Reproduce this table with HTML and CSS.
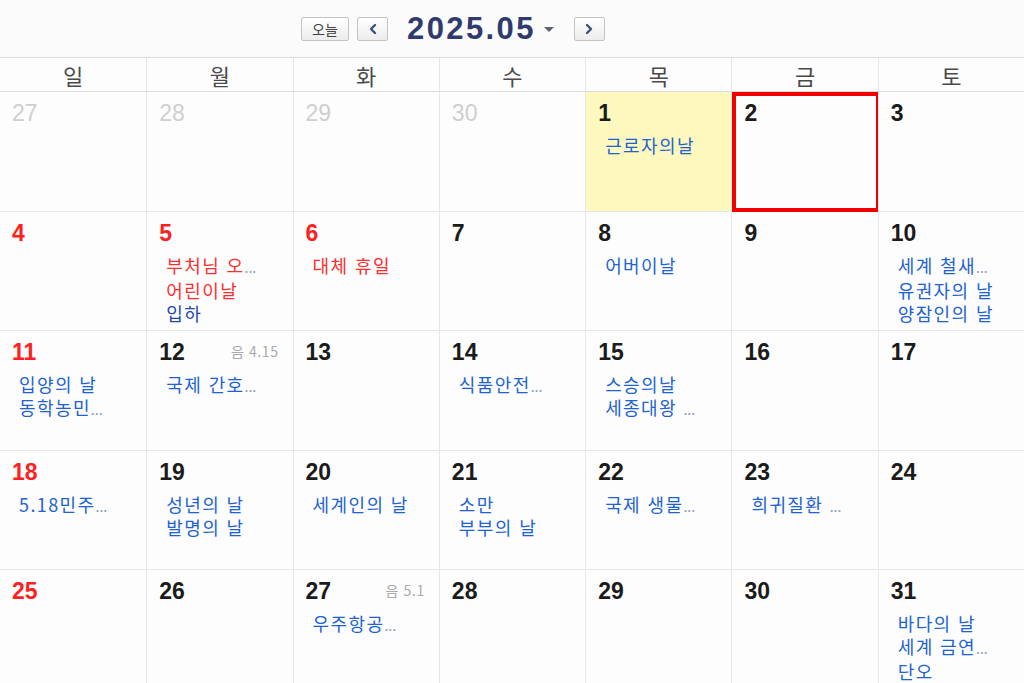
FILE: index.html
```html
<!DOCTYPE html>
<html lang="ko">
<head>
<meta charset="utf-8">
<title>2025.05 달력</title>
<link rel="stylesheet" href="styles.css">
</head>
<body>
<div class="toolbar">
  <button class="btn btn-today">오늘</button>
  <button class="btn btn-nav" aria-label="이전">
    <svg width="10" height="12" viewBox="0 0 10 12"><path d="M7 2 L3 6 L7 10" fill="none" stroke="#3d4f7a" stroke-width="2.4" stroke-linecap="round" stroke-linejoin="round"/></svg>
  </button>
  <div class="title">2025.05</div>
  <span class="caret"></span>
  <button class="btn btn-nav btn-next" aria-label="다음">
    <svg width="10" height="12" viewBox="0 0 10 12"><path d="M3 2 L7 6 L3 10" fill="none" stroke="#3d4f7a" stroke-width="2.4" stroke-linecap="round" stroke-linejoin="round"/></svg>
  </button>
</div>

<div class="dow">
  <div>일</div><div>월</div><div>화</div><div>수</div><div>목</div><div>금</div><div>토</div>
</div>

<div class="month">
  <div class="cell other"><div class="num">27</div></div>
  <div class="cell other"><div class="num">28</div></div>
  <div class="cell other"><div class="num">29</div></div>
  <div class="cell other"><div class="num">30</div></div>
  <div class="cell today"><div class="num">1</div><div class="ev">근로자의날</div></div>
  <div class="cell selected"><div class="num">2</div></div>
  <div class="cell"><div class="num">3</div></div>

  <div class="cell"><div class="num red">4</div></div>
  <div class="cell"><div class="num red">5</div><div class="ev red">부처님 오<span class="ell">...</span></div><div class="ev red">어린이날</div><div class="ev dark">입하</div></div>
  <div class="cell"><div class="num red">6</div><div class="ev red">대체 휴일</div></div>
  <div class="cell"><div class="num">7</div></div>
  <div class="cell"><div class="num">8</div><div class="ev">어버이날</div></div>
  <div class="cell"><div class="num">9</div></div>
  <div class="cell"><div class="num">10</div><div class="ev">세계 철새<span class="ell">...</span></div><div class="ev">유권자의 날</div><div class="ev">양잠인의 날</div></div>

  <div class="cell"><div class="num red">11</div><div class="ev">입양의 날</div><div class="ev">동학농민<span class="ell">...</span></div></div>
  <div class="cell"><div class="num">12</div><span class="lunar">음 4.15</span><div class="ev">국제 간호<span class="ell">...</span></div></div>
  <div class="cell"><div class="num">13</div></div>
  <div class="cell"><div class="num">14</div><div class="ev">식품안전<span class="ell">...</span></div></div>
  <div class="cell"><div class="num">15</div><div class="ev">스승의날</div><div class="ev">세종대왕 <span class="ell">...</span></div></div>
  <div class="cell"><div class="num">16</div></div>
  <div class="cell"><div class="num">17</div></div>

  <div class="cell"><div class="num red">18</div><div class="ev">5.18민주<span class="ell">...</span></div></div>
  <div class="cell"><div class="num">19</div><div class="ev">성년의 날</div><div class="ev">발명의 날</div></div>
  <div class="cell"><div class="num">20</div><div class="ev">세계인의 날</div></div>
  <div class="cell"><div class="num">21</div><div class="ev">소만</div><div class="ev">부부의 날</div></div>
  <div class="cell"><div class="num">22</div><div class="ev">국제 생물<span class="ell">...</span></div></div>
  <div class="cell"><div class="num">23</div><div class="ev">희귀질환 <span class="ell">...</span></div></div>
  <div class="cell"><div class="num">24</div></div>

  <div class="cell"><div class="num red">25</div></div>
  <div class="cell"><div class="num">26</div></div>
  <div class="cell"><div class="num">27</div><span class="lunar">음 5.1</span><div class="ev">우주항공<span class="ell">...</span></div></div>
  <div class="cell"><div class="num">28</div></div>
  <div class="cell"><div class="num">29</div></div>
  <div class="cell"><div class="num">30</div></div>
  <div class="cell"><div class="num">31</div><div class="ev">바다의 날</div><div class="ev">세계 금연<span class="ell">...</span></div><div class="ev">단오</div></div>
</div>
</body>
</html>
```

FILE: styles.css
```css
* { box-sizing: border-box; }

html, body {
  margin: 0;
  padding: 0;
  width: 1024px;
  height: 683px;
  overflow: hidden;
  background: #fdfdfd;
  font-family: "Noto Sans CJK KR", "Noto Sans", sans-serif;
}

.toolbar {
  height: 57px;
  display: flex;
  align-items: center;
  padding-left: 301px;
  background: #fbfbfb;
}

.btn {
  height: 24px;
  margin: 0;
  padding: 0;
  border: 1px solid #c4c4c4;
  border-radius: 2px;
  background: linear-gradient(#ffffff, #ececec);
  display: flex;
  align-items: center;
  justify-content: center;
  font-family: "Noto Sans CJK KR", sans-serif;
  color: #444;
  font-size: 14px;
  cursor: pointer;
}

.btn-today { width: 48px; }
.btn-nav { width: 31px; margin-left: 8px; }
.btn-next { margin-left: 20px; }

.title {
  margin-left: 19px;
  font-family: "Liberation Sans", Arial, sans-serif;
  font-weight: bold;
  font-size: 31px;
  letter-spacing: 2.4px;
  color: #2f3b6c;
  line-height: 1;
}

.caret {
  margin-left: 8px;
  width: 0;
  height: 0;
  border-left: 5.5px solid transparent;
  border-right: 5.5px solid transparent;
  border-top: 5px solid #5a6077;
  margin-top: 2px;
}

.dow {
  display: grid;
  grid-template-columns: repeat(7, 1fr);
  height: 35px;
  border-top: 1px solid #dcdcdc;
  border-bottom: 1px solid #dcdcdc;
  background: #fdfdfd;
}

.dow div {
  display: flex;
  align-items: center;
  justify-content: center;
  font-size: 22px;
  color: #4a4a4a;
  border-left: 1px solid #e6e6e6;
  line-height: 1;
}
.dow div:first-child { border-left: none; }

.month {
  display: grid;
  grid-template-columns: repeat(7, 1fr);
  grid-auto-rows: 119.5px;
}

.cell {
  position: relative;
  border-left: 1px solid #e6e6e6;
  border-bottom: 1px solid #e6e6e6;
  padding: 8px 0 0 0;
  background: #fdfdfd;
}
.cell:nth-child(7n+1) { border-left: none; }

.num {
  font-family: "Liberation Sans", Arial, sans-serif;
  font-weight: bold;
  font-size: 23px;
  line-height: 26px;
  padding-left: 12px;
  color: #1b1b1b;
  margin-bottom: 8px;
}

.num.red { color: #ff1f1f; }
.other .num { color: #cfcfcf; font-weight: normal; }

.today { background: #fdf8bd; }

.selected::after {
  content: "";
  position: absolute;
  left: 0;
  top: 0;
  right: -2px;
  bottom: -1px;
  border: 4px solid #f00000;
}

.lunar {
  position: absolute;
  top: 13px;
  right: 14px;
  font-size: 14px;
  letter-spacing: 0.6px;
  color: #aaaaaa;
  font-family: "Noto Sans CJK KR", sans-serif;
  line-height: 15px;
}

.ev {
  font-size: 18px;
  letter-spacing: 1.4px;
  line-height: 23px;
  padding-left: 19px;
  color: #1e63d2;
  white-space: nowrap;
}

.ev.red { color: #ff2d2d; }
.ev.dark { color: #1a48b0; }

.ell {
  color: #8a9ab8;
  font-size: 14px;
  letter-spacing: 0;
}
```
